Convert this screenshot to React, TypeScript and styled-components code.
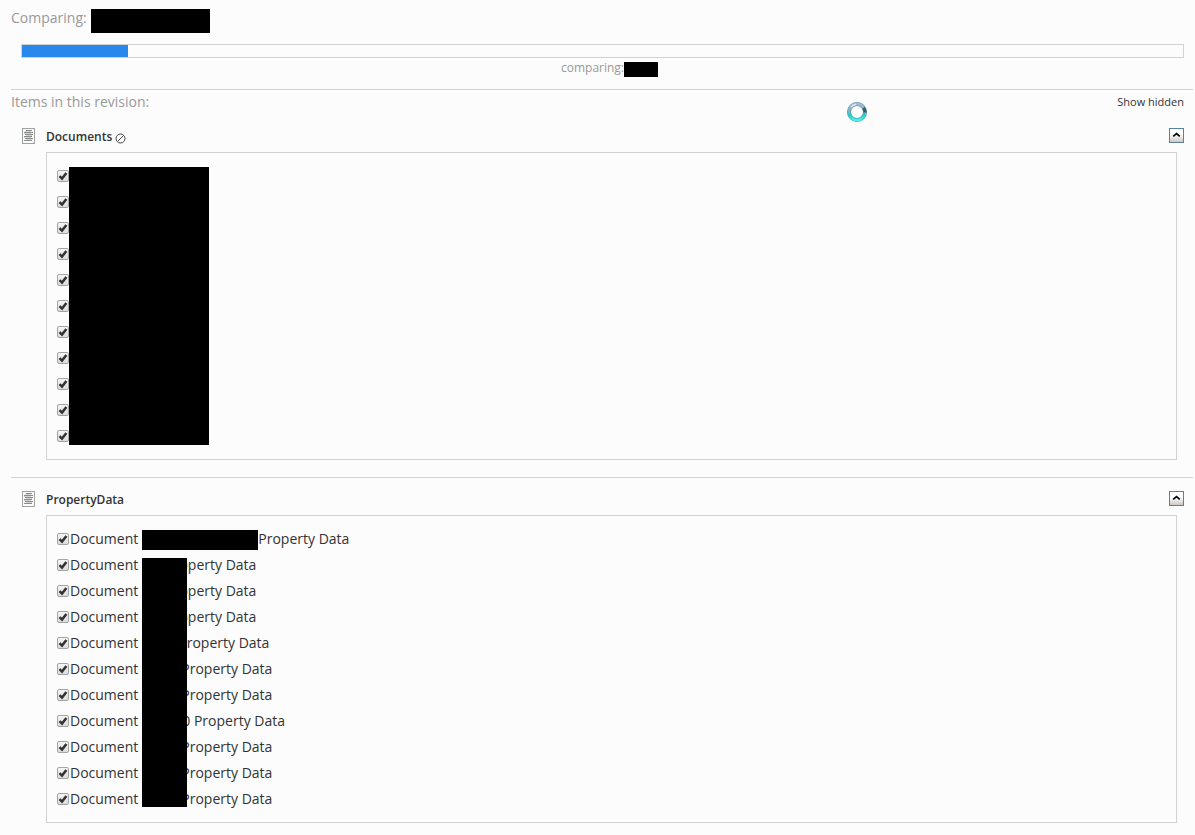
import React from "react";
import styled, { createGlobalStyle } from "styled-components";

const GlobalStyle = createGlobalStyle`
  *, *::before, *::after { box-sizing: border-box; }
  body {
    margin: 0;
    background: #fcfcfc;
    color: #333;
    font: 14px/26px "Open Sans", "Noto Sans", sans-serif;
  }
`;

const Page = styled.main`
  position: relative;
  padding: 9px 2px 12px 11px;
`;

const TitleBar = styled.header`
  display: flex;
  gap: 4px;
  height: 24px;
`;

const Heading = styled.h1`
  margin: 0;
  font-size: 14px;
  font-weight: 400;
  line-height: 18px;
  color: #999;
`;

const Redaction = styled.span<{ $width: number; $height: number }>`
  flex: none;
  width: ${(p) => p.$width}px;
  height: ${(p) => p.$height}px;
  background: #000;
`;

const ProgressArea = styled.div`
  padding: 11px 9px 11px 10px;
  border-bottom: 1px solid #d0d4d0;
`;

const ProgressTrack = styled.div`
  height: 14px;
  border: 1px solid #d0d4d0;
`;

const ProgressFill = styled.div`
  height: 100%;
  background: #2a88ec;
`;

const Caption = styled.div`
  display: flex;
  justify-content: center;
  height: 20px;
  font-size: 12px;
  line-height: 20px;
  color: #999;
`;

const CaptionValue = styled.span`
  display: flex;
  align-items: center;
  width: 20px;
  padding-top: 2px;
`;

const RevisionBar = styled.div`
  display: flex;
  justify-content: space-between;
  align-items: center;
  height: 24px;
  padding-right: 9px;
`;

const HiddenLink = styled.a`
  font-size: 11px;
  color: #333;
  text-decoration: none;
`;

const Section = styled.section`
  padding-top: 5px;

  ${RevisionBar} + & {
    padding-top: 6px;
  }

  & + & {
    margin-top: 17px;
    border-top: 1px solid #d0d4d0;
  }
`;

const SectionHeader = styled.div`
  display: flex;
  align-items: center;
  height: 32px;
  padding: 0 9px 0 11px;
`;

const SectionTitle = styled.h2`
  margin: 0 3px 0 11px;
  padding-top: 2px;
  font-size: 12px;
  font-weight: 600;
  color: #333;
`;

const ToggleButton = styled.button`
  display: grid;
  place-items: center;
  width: 15px;
  height: 15px;
  margin: 0 0 2px auto;
  padding: 0;
  border: 1px solid #5f7f9f;
  background: linear-gradient(#fff 40%, #ccc8c0);
`;

const List = styled.ul`
  position: relative;
  margin: 0 16px 0 35px;
  padding: 10px;
  border: 1px solid #d0d4d0;
  list-style: none;
`;

const Row = styled.li`
  height: 26px;
`;

const RowLabel = styled.label`
  display: flex;
  align-items: center;
  height: 26px;
`;

const CheckWrap = styled.span`
  display: grid;
  width: 12px;
  height: 12px;
  margin-right: 1px;

  & > * { grid-area: 1 / 1; }
  & > svg { pointer-events: none; }
`;

const CheckInput = styled.input`
  appearance: none;
  width: 12px;
  height: 12px;
  margin: 0;
  border: 1px solid #a4a4a4;
  border-radius: 2px;
  background: linear-gradient(#f4f4f4, #dcdcdc);

  &:not(:checked) + svg { visibility: hidden; }
`;

const NameSlot = styled.span<{ $width: number; $filled: boolean }>`
  width: ${(p) => p.$width}px;
  height: 20px;
  margin: 2px 0 0 4px;
  background: ${(p) => (p.$filled ? "#000" : "transparent")};
`;

const ListMask = styled.div<{ $left: number; $top: number; $width: number; $height: number }>`
  position: absolute;
  left: ${(p) => p.$left}px;
  top: ${(p) => p.$top}px;
  width: ${(p) => p.$width}px;
  height: ${(p) => p.$height}px;
  background: #000;
`;

const BusyCursor = styled.svg`
  position: absolute;
  left: 847px;
  top: 102px;
`;

const PageIcon = () => (
  <svg width="13" height="16" viewBox="0 0 13 16" aria-hidden="true">
    <rect x="0.5" y="0.5" width="12" height="15" fill="#fafafa" stroke="#a0a4a0" />
    <path
      d="M4 2.5h6M2 4.5h9M3 6.5h8M2 8.5h8M3 10.5h8M2 12.5h8"
      stroke="#8c8c8c"
    />
    <path d="M3 3.5h6M2 5.5h7M4 7.5h6M2 9.5h7M4 11.5h6" stroke="#d4d4d4" />
  </svg>
);

const BlockedIcon = () => (
  <svg width="11" height="11" viewBox="0 0 11 11" aria-hidden="true">
    <circle cx="5.5" cy="5.5" r="4.5" fill="none" stroke="#444" />
    <path d="M2.7 8.3 8.3 2.7" stroke="#444" />
  </svg>
);

const BlockedBadge = styled.span`
  display: flex;
  padding-top: 4px;
`;

const Tick = () => (
  <svg width="12" height="12" viewBox="0 0 12 12" aria-hidden="true">
    <path d="M2.5 6.2 5 8.6 9.4 2.9" fill="none" stroke="#333" strokeWidth="2.5" />
  </svg>
);

function Checkbox({ label }: { label?: string }) {
  return (
    <CheckWrap>
      <CheckInput type="checkbox" defaultChecked aria-label={label} />
      <Tick />
    </CheckWrap>
  );
}

function Toggle({ label }: { label: string }) {
  return (
    <ToggleButton type="button" aria-label={label}>
      <svg width="9" height="6" viewBox="0 0 9 6" aria-hidden="true">
        <path d="M1.2 4.4 4.5 1.6 7.8 4.4" fill="none" stroke="#000" strokeWidth="1.8" />
      </svg>
    </ToggleButton>
  );
}

const documents = Array.from({ length: 11 }, (_, i) => i + 1);

const properties = [
  { slot: 116, tail: "Property Data", filled: true },
  { slot: 23, tail: "Property Data" },
  { slot: 23, tail: "Property Data" },
  { slot: 23, tail: "Property Data" },
  { slot: 36, tail: "Property Data" },
  { slot: 39, tail: "Property Data" },
  { slot: 39, tail: "Property Data" },
  { slot: 40, tail: "0 Property Data" },
  { slot: 39, tail: "Property Data" },
  { slot: 39, tail: "Property Data" },
  { slot: 39, tail: "Property Data" },
];

export default function App() {
  const progress = 106 / 1161;

  return (
    <>
      <GlobalStyle />
      <Page>
        <TitleBar>
          <Heading>Comparing:</Heading>
          <Redaction $width={119} $height={24} />
        </TitleBar>

        <ProgressArea>
          <ProgressTrack role="progressbar" aria-valuenow={Math.round(progress * 100)}>
            <ProgressFill style={{ width: `${progress * 100}%` }} />
          </ProgressTrack>
          <Caption>
            comparing:
            <CaptionValue>
              <Redaction $width={34} $height={15} />
            </CaptionValue>
          </Caption>
        </ProgressArea>

        <RevisionBar>
          <Heading>Items in this revision:</Heading>
          <HiddenLink href="#hidden">Show hidden</HiddenLink>
        </RevisionBar>

        <Section>
          <SectionHeader>
            <PageIcon />
            <SectionTitle>Documents</SectionTitle>
            <BlockedBadge>
              <BlockedIcon />
            </BlockedBadge>
            <Toggle label="Collapse Documents" />
          </SectionHeader>
          <List>
            {documents.map((n) => (
              <Row key={n}>
                <RowLabel>
                  <Checkbox label={`Document ${n}`} />
                </RowLabel>
              </Row>
            ))}
            <ListMask $left={22} $top={14} $width={140} $height={278} />
          </List>
        </Section>

        <Section>
          <SectionHeader>
            <PageIcon />
            <SectionTitle>PropertyData</SectionTitle>
            <Toggle label="Collapse PropertyData" />
          </SectionHeader>
          <List>
            {properties.map((p, i) => (
              <Row key={i}>
                <RowLabel>
                  <Checkbox />
                  <span>Document</span>
                  <NameSlot $width={p.slot} $filled={!!p.filled} />
                  <span>{p.tail}</span>
                </RowLabel>
              </Row>
            ))}
            <ListMask $left={95} $top={42} $width={45} $height={249} />
          </List>
        </Section>

        <BusyCursor width="20" height="20" viewBox="0 0 20 20" aria-hidden="true">
          <defs>
            <linearGradient id="ring" x1="0" y1="0" x2="0" y2="1">
              <stop offset="0" stopColor="#a9b8dc" />
              <stop offset="0.45" stopColor="#7fb4c0" />
              <stop offset="0.7" stopColor="#1fd0cc" />
              <stop offset="1" stopColor="#4feee6" />
            </linearGradient>
          </defs>
          <circle cx="10" cy="10" r="8" fill="#fff" stroke="#5a8f98" strokeWidth="4" />
          <circle cx="10" cy="10" r="8" fill="none" stroke="url(#ring)" strokeWidth="3" />
          <path d="M16.5 5.8A8 8 0 0 1 18 10.5" fill="none" stroke="#2f5f68" strokeWidth="3" />
          <path d="M4 5A8 8 0 0 1 9 2.2" fill="none" stroke="#dfe8f8" strokeWidth="1.4" />
        </BusyCursor>
      </Page>
    </>
  );
}
